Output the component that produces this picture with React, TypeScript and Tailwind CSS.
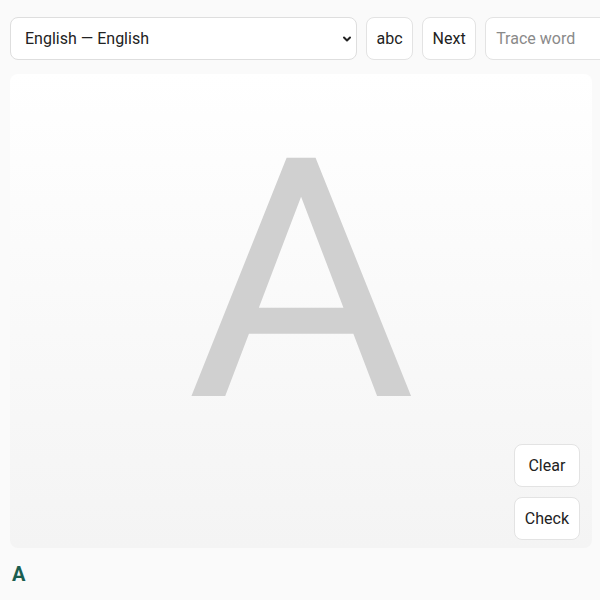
import React from "react";

export default function App() {
  return (
    <div
      className="min-h-screen w-[600px] overflow-hidden bg-[#fafafa] px-[10px] pt-[17px]"
      style={{ fontFamily: "Roboto, 'Liberation Sans', sans-serif" }}
    >
      <div className="flex items-center gap-[9px] w-[800px]">
        <div className="relative w-[347px] h-[43px] shrink-0">
          <select className="appearance-none w-full h-full rounded-[8px] border border-[#dedede] bg-white pl-[14px] pr-8 text-[16px] text-[#222] outline-none">
            <option>English — English</option>
          </select>
          <svg
            className="pointer-events-none absolute right-[4px] top-1/2 -translate-y-1/2"
            width="12"
            height="12"
            viewBox="0 0 12 12"
          >
            <path d="M3 4.5 L6 7.5 L9 4.5" fill="none" stroke="#222" strokeWidth="2" strokeLinecap="round" strokeLinejoin="round" />
          </svg>
        </div>
        <button className="h-[43px] shrink-0 rounded-[8px] border border-[#e3e3e3] bg-white px-[9.5px] text-[16px] text-[#222]">
          abc
        </button>
        <button className="h-[43px] shrink-0 rounded-[8px] border border-[#e3e3e3] bg-white px-[9.5px] text-[16px] text-[#222]">
          Next
        </button>
        <input
          placeholder="Trace word"
          className="h-[43px] w-[200px] shrink-0 rounded-[8px] border border-[#e3e3e3] bg-white px-[10px] text-[16px] text-[#222] placeholder:text-[#8a8a8a] outline-none"
        />
      </div>

      <div className="relative mt-[14px] h-[474px] w-[582px] overflow-hidden rounded-[8px] bg-gradient-to-b from-white to-[#f4f4f4]">
        <svg className="absolute inset-0" width="582" height="474" viewBox="0 0 582 474">
          <g transform="translate(291 0) scale(1.048 1) translate(-291 0)">
            <text
              x="291"
              y="322"
              textAnchor="middle"
              fontSize="335"
              fill="#d0d0d0"
              fontFamily="Roboto, 'Liberation Sans', sans-serif"
            >
              A
            </text>
          </g>
        </svg>
        <div className="absolute right-[12px] bottom-[8px] flex flex-col items-stretch gap-[10px]">
          <button className="h-[43px] rounded-[8px] border border-[#e3e3e3] bg-white px-[10px] text-[16px] text-[#222]">
            Clear
          </button>
          <button className="h-[43px] rounded-[8px] border border-[#e3e3e3] bg-white px-[10px] text-[16px] text-[#222]">
            Check
          </button>
        </div>
      </div>

      <div className="mt-[12px] text-[20px] leading-[28px] font-bold text-[#1b5e50] pl-[2px]">A</div>
    </div>
  );
}
